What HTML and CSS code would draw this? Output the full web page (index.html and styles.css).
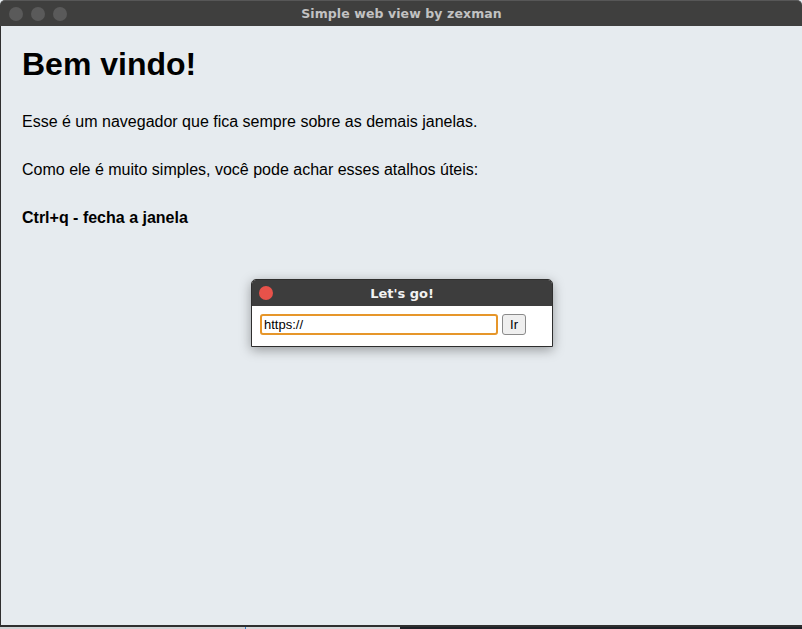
FILE: index.html
```html
<!DOCTYPE html>
<html lang="pt">
<head>
<meta charset="utf-8">
<title>Simple web view by zexman</title>
<link rel="stylesheet" href="styles.css">
</head>
<body>
<div class="screen">
  <div class="window">
    <div class="titlebar">
      <div class="controls">
        <span class="dot"></span><span class="dot"></span><span class="dot"></span>
      </div>
      <div class="title">Simple web view by zexman</div>
    </div>
    <div class="content">
      <h1 class="heading">Bem vindo!</h1>
      <p class="text">Esse é um navegador que fica sempre sobre as demais janelas.</p>
      <p class="text">Como ele é muito simples, você pode achar esses atalhos úteis:</p>
      <p class="text bold">Ctrl+q - fecha a janela</p>

      <div class="dialog">
        <div class="dialog-bar">
          <span class="close"></span>
          <span class="dialog-title">Let's go!</span>
        </div>
        <div class="dialog-body">
          <input class="url" type="text" value="https://">
          <button class="go" type="button">Ir</button>
        </div>
      </div>
    </div>
  </div>
  <div class="taskbar">
    <div class="tb-light"></div>
    <div class="tb-mark"></div>
    <div class="tb-light2"></div>
    <div class="tb-dark"></div>
  </div>
</div>
</body>
</html>
```

FILE: styles.css
```css
html, body {
  margin: 0;
  padding: 0;
  background: #1e2127;
}
.screen {
  width: 802px;
  height: 629px;
  display: flex;
  flex-direction: column;
  overflow: hidden;
}
.window {
  height: 627px;
  display: flex;
  flex-direction: column;
  background: #e6ebef;
}
.titlebar {
  height: 26px;
  flex: none;
  background: #3f3f3e;
  border-top: 1px solid #575757;
  box-sizing: border-box;
  border-radius: 5px 5px 0 0;
  display: flex;
  align-items: center;
  position: relative;
}
.controls {
  display: flex;
  gap: 8px;
  padding-left: 9px;
}
.dot {
  width: 14px;
  height: 14px;
  border-radius: 50%;
  background: #5a5a5a;
}
.title {
  flex: 1;
  text-align: center;
  margin-left: -66px;
  font-family: "DejaVu Sans", sans-serif;
  font-weight: bold;
  font-size: 12.5px;
  color: #c2c2c2;
  letter-spacing: 0.1px;
}
.content {
  flex: 1;
  position: relative;
  border-left: 1px solid #2f2f2f;
  border-bottom: 2px solid #2f2f2f;
  padding-left: 21px;
  font-family: "Liberation Sans", Arial, sans-serif;
  color: #000;
}
.heading {
  margin: 20px 0 0;
  font-size: 32px;
  line-height: 37px;
  font-weight: bold;
}
.text {
  margin: 30px 0 0;
  font-size: 16px;
  line-height: 18px;
}
.bold {
  font-weight: bold;
}
.dialog {
  position: absolute;
  left: 250px;
  top: 253px;
  width: 300px;
  background: #fff;
  border: 1px solid #2e2e2e;
  border-radius: 5px 5px 0 0;
  box-shadow: 0 3px 12px rgba(0, 0, 0, 0.35);
  overflow: hidden;
}
.dialog-bar {
  height: 26px;
  background: #3d3d3d;
  display: flex;
  align-items: center;
  padding-left: 7px;
}
.close {
  width: 14px;
  height: 14px;
  border-radius: 50%;
  background: #e8524a;
}
.dialog-title {
  flex: 1;
  text-align: center;
  margin-left: -21px;
  font-family: "DejaVu Sans", sans-serif;
  font-weight: bold;
  font-size: 13px;
  color: #f2f2f2;
}
.dialog-body {
  height: 40px;
  display: flex;
  align-items: flex-start;
  gap: 4px;
  padding: 8px 0 0 8px;
  box-sizing: border-box;
}
.url {
  width: 238px;
  height: 21px;
  box-sizing: border-box;
  border: 2px solid #e6962a;
  border-radius: 3px;
  padding: 0 2px;
  font-family: "Liberation Sans", Arial, sans-serif;
  font-size: 13px;
  color: #000;
  outline: none;
  margin: 0;
}
.go {
  width: 24px;
  height: 21px;
  box-sizing: border-box;
  border: 1px solid #8a8a8a;
  border-radius: 3px;
  background: #efefef;
  font-family: "Liberation Sans", Arial, sans-serif;
  font-size: 13px;
  color: #000;
  padding: 0;
  margin: 0;
}
.taskbar {
  flex: 1;
  display: flex;
}
.tb-light {
  width: 245px;
  background: #cfd2d4;
}
.tb-mark {
  width: 1px;
  background: #3a7ac8;
}
.tb-light2 {
  width: 154px;
  background: #d6d8da;
}
.tb-dark {
  flex: 1;
  background: #1e2127;
}
```
